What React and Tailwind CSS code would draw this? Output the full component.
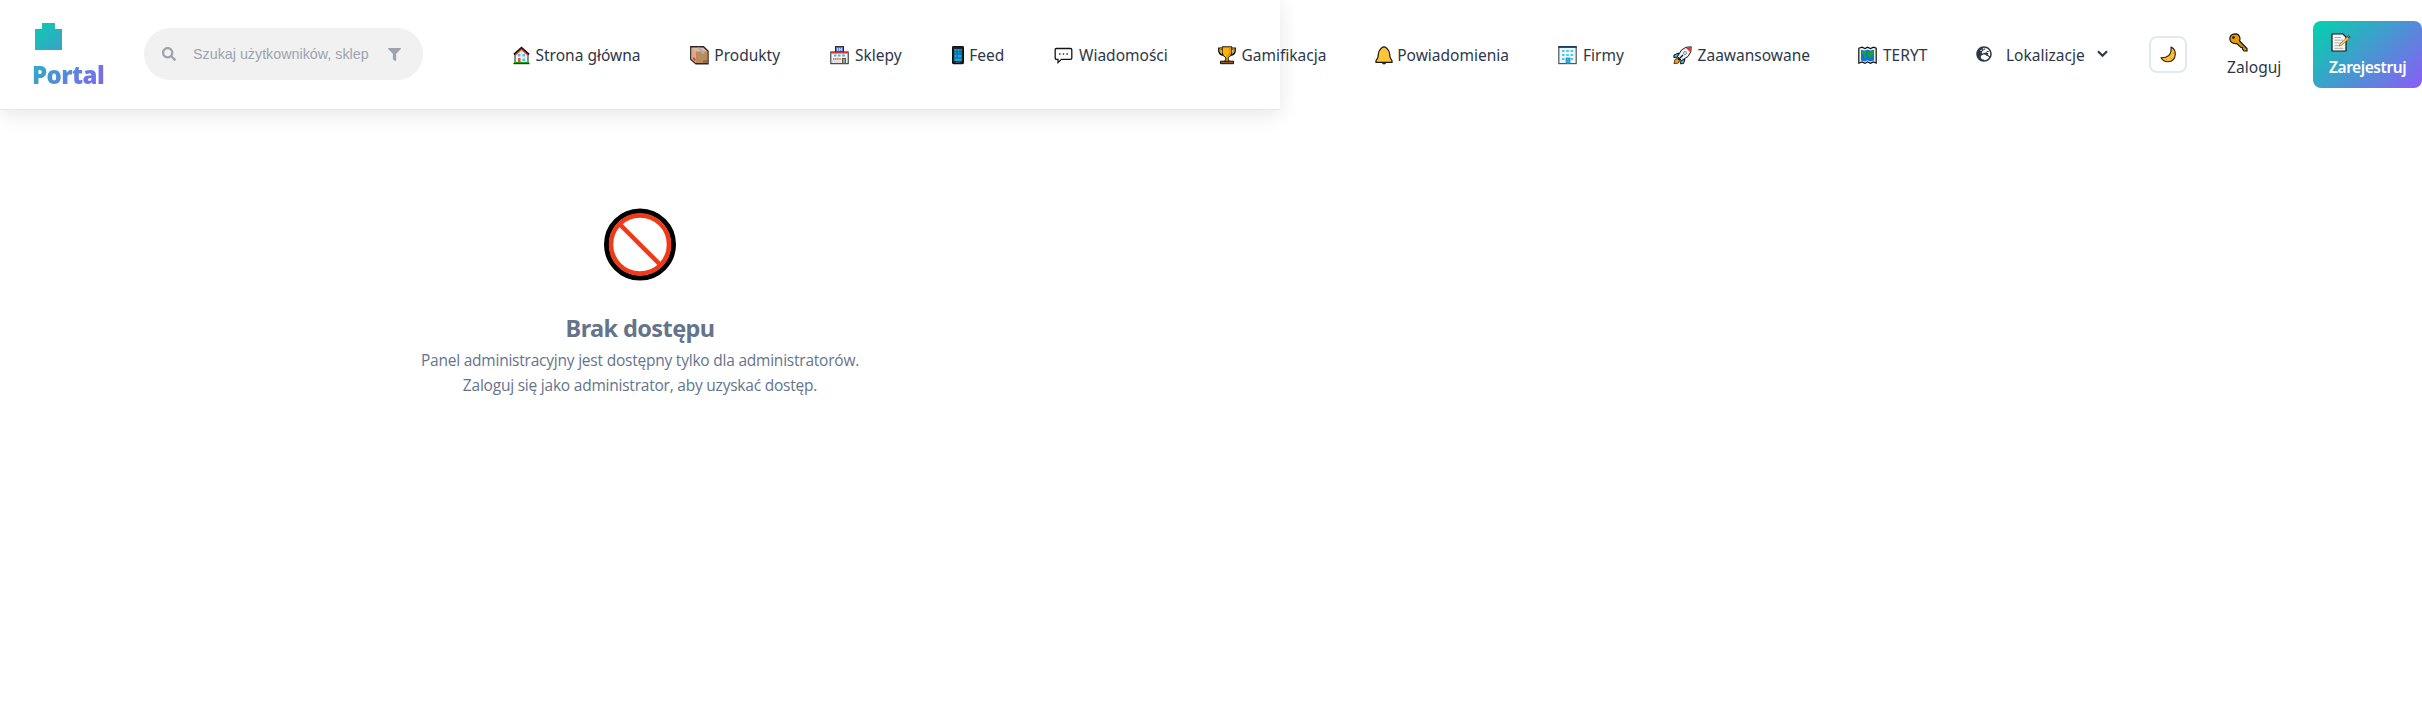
import React from "react";
import { FaSearch, FaFilter, FaGlobeEurope } from "react-icons/fa";

const House = () => (
  <svg width="17" height="19" viewBox="0 0 17 19">
    <path d="M2 8 8.500 2 15 8V17H2Z" fill="#f1f1f1" stroke="#222" strokeWidth="1" />
    <path d="M1 8.500 8.500 1.800 16 8.500" fill="none" stroke="#111" strokeWidth="2" />
    <path d="M2.300 9 8.500 3.300 14.700 9" fill="none" stroke="#f0391c" strokeWidth="1.300" />
    <rect x="5" y="8" width="2.500" height="2.500" fill="#40c4f5" />
    <rect x="9.500" y="8" width="2.500" height="2.500" fill="#40c4f5" />
    <rect x="9.500" y="12.500" width="2.500" height="2.500" fill="#40c4f5" />
    <rect x="5" y="12" width="2.500" height="5" fill="#f04a2c" />
    <path d="M.5 17.600H16.500" stroke="#1a3a14" strokeWidth="1.200" />
    <path d="M1 16.500H16" stroke="#16a514" strokeWidth="1.200" />
  </svg>
);
const Parcel = () => (
  <svg width="19" height="19" viewBox="0 0 19 19">
    <path d="M.8 .8H13.500L18 5V17.700H6L.8 13.500Z" fill="#e2b9a0" stroke="#2b2320" strokeWidth="1.400" />
    <path d="M5.500 5.500H17.400V17H6Z" fill="#bb8b5e" />
    <path d="M1.500 1.500 6 6V17L1.500 13Z" fill="#d9aa8b" />
    <path d="M7 1.500 11.500 6V8H14V6L9.500 1.500Z" fill="#9fb0c0" />
    <path d="M3.500 11.500 5 13V14.500L3.500 13Z" fill="#f02b2b" stroke="#f02b2b" />
    <path d="M14 16.500V14.500M16 16.500V14" stroke="#5c4227" />
  </svg>
);
const Shop = () => (
  <svg width="19" height="19" viewBox="0 0 19 19">
    <rect x="5.500" y=".6" width="8" height="6" fill="#5b7be0" stroke="#222" />
    <path d="M7.500 2V5M9.500 2V5M9.500 3.500H11M11.500 2V5" stroke="#e8eeff" strokeWidth=".8" />
    <rect x=".8" y="6" width="17.400" height="11.700" fill="#f4f4f4" stroke="#222" />
    <rect x="1.300" y="5.800" width="16.400" height="1.700" fill="#e0301e" />
    <path d="M4 9.500H6.500M8 9.500H10.500M12 9.500H15" stroke="#38bdf0" strokeWidth="2.200" />
    <path d="M3 13H11" stroke="#f24b39" strokeWidth="1.400" strokeDasharray="1.300 .5" />
    <path d="M2 15.500H11" stroke="#dadada" strokeWidth="2" />
    <rect x="12.500" y="12.500" width="3" height="4.700" fill="#58b9d8" stroke="#8a4d22" />
  </svg>
);
const Phone = () => (
  <svg width="12" height="19" viewBox="0 0 12 19">
    <rect x=".6" y=".6" width="10.800" height="17" rx=".8" fill="#252525" stroke="#111" strokeWidth="1.200" />
    <rect x="2.300" y="3" width="7.400" height="12" fill="#12a9e8" />
    <path d="M2 5.700H10M2 8H10M2 12H10M5 3V12M8 3V9" stroke="#0b5278" strokeWidth=".8" />
    <path d="M4 16.200H8" stroke="#777" strokeWidth=".7" />
  </svg>
);
const Bubble = () => (
  <svg width="19" height="19" viewBox="0 0 19 19">
    <path d="M2.500 2.500H16.500Q17.800 2.500 17.800 3.800V12Q17.800 13.300 16.500 13.300H7.500L4 16.600V13.300H2.500Q1.200 13.300 1.200 12V3.800Q1.200 2.500 2.500 2.500Z" fill="#fff" stroke="#151515" strokeWidth="1.300" />
    <path d="M5 8H6.500M8.700 8H10.200M12.400 8H13.900" stroke="#333" strokeWidth="1.500" />
  </svg>
);
const Trophy = () => (
  <svg width="18" height="19" viewBox="0 0 18 19">
    <path d="M5 2.500H1.200V5Q1.500 8.500 5.500 9M13 2.500H16.800V5Q16.500 8.500 12.500 9" fill="none" stroke="#111" strokeWidth="2.200" />
    <path d="M5 2.700H1.800V5Q2 7.500 5.500 8.200M13 2.700H16.200V5Q16 7.500 12.500 8.200" fill="none" stroke="#e89b06" strokeWidth="1" />
    <path d="M4.200 .8H13.800V6.500Q13.300 10.500 10.200 11.500V14L12 15.500H6L7.800 14V11.500Q4.700 10.500 4.200 6.500Z" fill="#fbb40c" stroke="#15110a" strokeWidth="1" />
    <path d="M12 1.500V6.500Q11.500 9.500 9.500 10.500" fill="none" stroke="#dc9100" strokeWidth="1.600" />
    <path d="M2.500 15.200H15.500V17.700H2.500Z" fill="#8f5328" stroke="#15110a" />
  </svg>
);
const Bell = () => (
  <svg width="18" height="19" viewBox="0 0 18 19">
    <path d="M6.500 16H11.500Q10.500 18 9 18 7.500 18 6.500 16Z" fill="#945314" stroke="#15110a" />
    <path d="M9 .8C11 .8 11 2.200 12.500 3.100 15 5.100 14.500 9 15.200 11.700L17 14.600V16.300H1V14.600L2.800 11.700C3.500 9 3 5.100 5.500 3.100 7 2.200 7 .8 9 .8Z" fill="#fec43a" stroke="#1b1509" strokeWidth="1.200" />
  </svg>
);
const Office = () => (
  <svg width="19" height="19" viewBox="0 0 19 19">
    <rect x=".8" y="1" width="17.400" height="16.600" fill="#edf7fa" stroke="#4a555c" strokeWidth="1.200" />
    <path d="M.3 .9H18.700" stroke="#173c5c" strokeWidth="1.800" />
    <path d="M4 5H6.500M8.300 5H10.800M12.600 5H15.100M4 9H6.500M8.300 9H10.800M12.600 9H15.100M4 13H6.500M12.600 13H15.100" stroke="#43caf6" strokeWidth="2" />
    <rect x="8" y="12" width="4" height="5.300" fill="#24b2ee" stroke="#2186b6" strokeWidth=".7" />
  </svg>
);
const Rocket = () => (
  <svg width="19" height="19" viewBox="0 0 19 19">
    <path d="M5.500 7 1 9 .8 11.500 5 11ZM12 13.500 10.500 17.500 7.500 17.800 8 14Z" fill="#3cc6ee" stroke="#111" />
    <path d="M2 13.500 5 12 7 14 5.500 17 1 17.700Z" fill="#f5a51a" stroke="#4a2110" strokeWidth=".9" />
    <path d="M18.200 .8Q12.500 .2 8.500 4L4.500 10.500 8.500 14.500 15 10.500Q19 6 18.200 .8Z" fill="#f0f3f5" stroke="#181818" />
    <path d="M17.700 1.300Q15 1.100 13 2L17 6Q18 4 17.700 1.300Z" fill="#eb3030" />
    <circle cx="12" cy="7" r="1.600" fill="#bde8f5" stroke="#68747b" strokeWidth=".7" />
    <path d="M5 14 10 9" stroke="#111" strokeWidth="1.200" />
  </svg>
);
const MapIcon = () => (
  <svg width="19" height="19" viewBox="0 0 19 19">
    <path d="M.8 2.200 4 1.200 7 2.500 9.500 1.200 12.500 2.500 15.500 1.200 18.200 2.200V17.200L15.500 16 12.500 17.400 9.500 16 7 17.400 4 16 .8 17.200Z" fill="#eee" stroke="#111" strokeWidth="1.200" />
    <path d="M3 4 7 4.500 9.500 3.700 12.500 4.500 16 3.700V14.500L12.500 15.500 9.500 14.300 7 15.500 3 14.500Z" fill="#1172d8" />
    <path d="M3.500 5 8 5 8.500 7 7 9 8 10.500 7.500 13 6 11 5.500 8.500 3.500 7.500ZM9.500 6 12 5 15.500 4.500V8L13.500 10 12 12.500 10.500 10Z" fill="#18a62b" />
  </svg>
);
const Moon = () => (
  <svg width="17" height="17" viewBox="0 0 17 17">
    <path d="M11 1Q15.500 3 15.300 8.500 14.800 15.500 8 15.700 3.200 15.700 1 11.800 6 12 8.800 9.500 11.700 6.500 11 1Z" fill="#fdc036" stroke="#2a2009" strokeWidth="1.100" strokeLinejoin="round" />
    <path d="M13.500 7V8M10.500 12.500H11.500M6 13.500H7" stroke="#d28b10" />
  </svg>
);
const KeyIcon = () => (
  <svg width="19" height="19" viewBox="0 0 19 19">
    <path d="M6 .9Q10.500 1 11 5.500L10.600 8 18 15.500V18H15L13.500 16V14.500H12L7.800 10.500Q1.500 11 .8 6 1 1 6 .9Z" fill="#e69d0c" stroke="#17130a" strokeWidth="1.200" />
    <circle cx="4.500" cy="4.500" r="1.300" fill="#17130a" />
    <path d="M10 9.500 16.500 16" stroke="#b97800" />
  </svg>
);
const Memo = () => (
  <svg width="20" height="19" viewBox="0 0 20 19">
    <path d="M1 1H12L15 4V18H1Z" fill="#f5f5f5" stroke="#181818" strokeWidth="1.200" />
    <path d="M3.500 4.500H10M3.500 7.200H12M3.500 9.900H10M3.500 12.600H8M3.500 15.300H12.500" stroke="#aaa" strokeWidth=".9" />
    <path d="M8 13 9 10.800 16.500 4 18 5.500 10.500 12.300Z" fill="#fbc646" stroke="#6a5320" strokeWidth=".5" />
    <path d="M16.500 3.200 17.500 2.400 19.300 4.200 18.400 5.200Z" fill="#e87668" stroke="#222" strokeWidth=".7" />
  </svg>
);

const items = [
  { Icon: House, text: "Strona główna", item: "w-[177px]", slot: "w-[22.500px]" },
  { Icon: Parcel, text: "Produkty", item: "w-[140px]", slot: "w-[24.300px]" },
  { Icon: Shop, text: "Sklepy", item: "w-[122px]", slot: "w-[25px]" },
  { Icon: Phone, text: "Feed", item: "w-[102px]", slot: "w-[17.200px]" },
  { Icon: Bubble, text: "Wiadomości", item: "w-[164px]", slot: "w-[25px]" },
  { Icon: Trophy, text: "Gamifikacja", item: "w-[157px]", slot: "w-[23.500px]" },
  { Icon: Bell, text: "Powiadomienia", item: "w-[183px]", slot: "w-[22.200px]" },
  { Icon: Office, text: "Firmy", item: "w-[115px]", slot: "w-[25px]" },
  { Icon: Rocket, text: "Zaawansowane", item: "w-[185px]", slot: "w-[24.600px]" },
  { Icon: MapIcon, text: "TERYT", item: "w-[118px]", slot: "w-[25px]" },
];

export default function App() {
  return (
    <div className="h-[720px] w-[2422px] overflow-hidden bg-white font-['Noto_Sans','Open_Sans',sans-serif]">
      <header className="flex h-[110px] w-[1280px] items-start border-b border-[#e5e7eb] bg-white whitespace-nowrap shadow-[0_4px_20px_rgba(0,0,0,0.1)]">
        <a className="ml-8 mt-4 flex h-[78px] w-[73px] shrink-0 flex-col bg-[linear-gradient(135deg,#00d4aa,#8b5cf6)] bg-clip-text font-['Open_Sans','Noto_Sans',sans-serif] text-[24px] font-extrabold tracking-[-0.55px] text-transparent">
          <svg width="32" height="38" viewBox="0 0 32 38" className="shrink-0">
            <defs>
              <linearGradient id="brand" gradientUnits="userSpaceOnUse" x1="-1" y1="1" x2="74" y2="76">
                <stop offset="0" stopColor="#00d4aa" />
                <stop offset="1" stopColor="#8b5cf6" />
              </linearGradient>
            </defs>
            <path d="M10 7H23V13H30V34H3V13H10Z" fill="url(#brand)" />
          </svg>
          <span className="mt-0.5 leading-[38px]">Portal</span>
        </a>
        <div className="ml-[39px] mt-7 flex h-[52px] w-[279px] shrink-0 items-center rounded-full bg-[#f1f1f1] pl-[18px] text-[#9ca3af]">
          <FaSearch size={14} />
          <span className="ml-[17px] w-[176px] pt-[2px] font-['Liberation_Sans',Arial,sans-serif] text-[14.300px]">Szukaj użytkowników, sklep</span>
          <FaFilter size={13} className="ml-[19px]" />
        </div>
        <nav className="ml-[90px] mt-[46px] flex h-[19px] shrink-0 items-center text-[15.500px] text-[#2d3748]">
          {items.map(({ Icon, text, item, slot }) => (
            <a key={text} className={"flex h-[19px] shrink-0 items-center " + item}>
              <span className={"shrink-0 " + slot}><Icon /></span>
              <span className="leading-[19px]">{text}</span>
            </a>
          ))}
          <a className="flex h-[19px] w-[173px] shrink-0 items-center">
            <FaGlobeEurope size={16} className="mb-[3px]" />
            <span className="ml-[14px] w-[91px] leading-[19px]">Lokalizacje</span>
            <svg width="11" height="8" viewBox="0 0 11 8" className="mb-[3px]"><path d="M1 1.300 5.500 5.800 10 1.300" fill="none" stroke="currentColor" strokeWidth="2.100" /></svg>
          </a>
        </nav>
        <button className="mt-9 flex h-[37px] w-[38px] shrink-0 items-center justify-center rounded-lg border-2 border-[#e2e8f0] bg-white"><Moon /></button>
        <a className="ml-[40px] mt-[33px] flex w-[86px] shrink-0 flex-col text-[15.500px] tracking-[0.05px] text-[#2d3748]">
          <span className="ml-[2px]"><KeyIcon /></span>
          <span className="mt-[3px] leading-6">Zaloguj</span>
        </a>
        <a className="mt-[21px] flex h-[67px] w-[109px] shrink-0 flex-col rounded-lg bg-[linear-gradient(135deg,#00d4aa,#8b5cf6)] pl-4 pt-3 text-[15.500px] font-semibold tracking-[-0.43px] text-white">
          <span className="ml-[2px]"><Memo /></span>
          <span className="mt-[3px] leading-6">Zarejestruj</span>
        </a>
      </header>
      <main className="flex w-[1280px] flex-col items-center pt-[98px] text-[#64748b]">
        <svg width="72" height="73" viewBox="0 0 72 73">
          <circle cx="36" cy="36.500" r="33.500" fill="#fff" stroke="#000" strokeWidth="5" />
          <circle cx="36" cy="36.500" r="29" fill="none" stroke="#f03a17" strokeWidth="4.500" />
          <path d="M16 16.500 56 56.500" stroke="#f03a17" strokeWidth="4.500" />
        </svg>
        <h1 className="mt-[29px] text-[23.500px] leading-[36px] font-bold tracking-[-0.6px]">Brak dostępu</h1>
        <p className="mt-[2px] text-center font-['Open_Sans','Noto_Sans',sans-serif] text-[15.500px] leading-[25px] tracking-[-0.22px]">Panel administracyjny jest dostępny tylko dla administratorów.<br />Zaloguj się jako administrator, aby uzyskać dostęp.</p>
      </main>
    </div>
  );
}
